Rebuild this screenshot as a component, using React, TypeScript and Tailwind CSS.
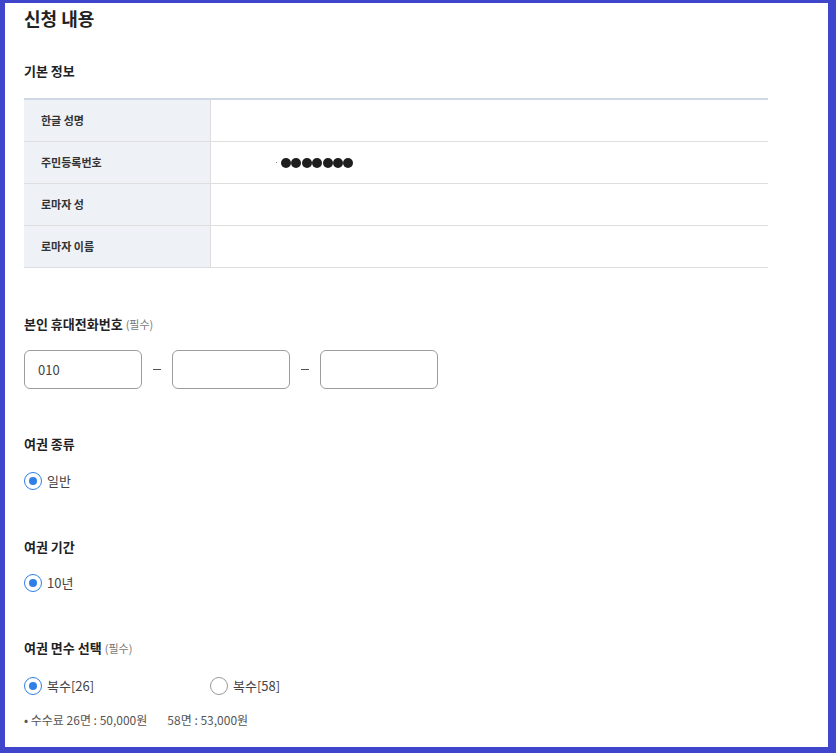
import React from 'react';

const rows = ['한글 성명', '주민등록번호', '로마자 성', '로마자 이름'];

function Radio({ checked, label }: { checked?: boolean; label: string }) {
  return (
    <div className="flex items-center gap-[5px] h-[20px]">
      <span
        className={`w-[18px] h-[18px] rounded-full border-[1.5px] flex items-center justify-center bg-white ${
          checked ? 'border-[#2f7fe6]' : 'border-[#9a9a9a]'
        }`}
      >
        {checked && <span className="w-[8px] h-[8px] rounded-full bg-[#2f7fe6]" />}
      </span>
      <span className="text-[13px] text-[#444] leading-[20px]">{label}</span>
    </div>
  );
}

function Heading({ children, required }: { children: React.ReactNode; required?: boolean }) {
  return (
    <div className="text-[13px] leading-[20px] font-bold text-[#222]">
      {children}
      {required && <span className="ml-[3px] text-[11px] font-normal text-[#777]">(필수)</span>}
    </div>
  );
}

export default function App() {
  return (
    <div
      className="w-[836px] h-[753px] bg-[#3f46cc] pt-[3px] pl-[5px] pr-[8px] pb-[6px]"
      style={{ fontFamily: '"Noto Sans CJK KR", "Noto Sans", sans-serif' }}
    >
      <div className="w-full h-full bg-white overflow-hidden pl-[19px] flex flex-col">
        <h1 className="mt-[2px] text-[18px] leading-[26px] font-bold text-[#222]">신청 내용</h1>

        <div className="mt-[30px]">
          <Heading>기본 정보</Heading>
        </div>

        {/* basic info table */}
        <div className="mt-[17px] w-[744px] border-t-2 border-[#cfd8e4]">
          {rows.map((r, i) => (
            <div key={r} className="flex h-[42px] border-b border-[#dedede]">
              <div className="w-[187px] shrink-0 bg-[#eef1f5] border-r border-[#dedede] pl-[17px] flex items-center text-[11px] font-semibold text-[#333]">
                {r}
              </div>
              <div className="flex-1 flex items-center">
                {i === 1 && (
                  <div className="flex items-center pl-[65px]">
                    <span className="w-[1px] h-[1px] bg-[#888] mr-[4px]" />
                    <div className="flex gap-[0.4px]">
                      {Array.from({ length: 7 }).map((_, k) => (
                        <span key={k} className="w-[10px] h-[10px] rounded-full bg-[#1e1e1e]" />
                      ))}
                    </div>
                  </div>
                )}
              </div>
            </div>
          ))}
        </div>

        <div className="mt-[46px]">
          <Heading required>본인 휴대전화번호</Heading>
        </div>
        <div className="mt-[16px] flex items-center">
          <div className="w-[118px] h-[39px] rounded-[6px] border border-[#9c9c9c] flex items-center pl-[13px] text-[13px] text-[#444]">
            010
          </div>
          <span className="w-[30px] flex justify-center">
            <span className="w-[8px] h-[1px] bg-[#555]" />
          </span>
          <div className="w-[118px] h-[39px] rounded-[6px] border border-[#9c9c9c]" />
          <span className="w-[30px] flex justify-center">
            <span className="w-[8px] h-[1px] bg-[#555]" />
          </span>
          <div className="w-[118px] h-[39px] rounded-[6px] border border-[#9c9c9c]" />
        </div>

        <div className="mt-[45px]">
          <Heading>여권 종류</Heading>
        </div>
        <div className="mt-[17px]">
          <Radio checked label="일반" />
        </div>

        <div className="mt-[46px]">
          <Heading>여권 기간</Heading>
        </div>
        <div className="mt-[16px]">
          <Radio checked label="10년" />
        </div>

        <div className="mt-[45px]">
          <Heading required>여권 면수 선택</Heading>
        </div>
        <div className="mt-[18px] flex">
          <div className="w-[186px]">
            <Radio checked label="복수[26]" />
          </div>
          <Radio label="복수[58]" />
        </div>

        <div className="mt-[16px] flex text-[12px] leading-[16px] text-[#555]">
          <span>• 수수료 26면 : 50,000원</span>
          <span className="ml-[20px]">58면 : 53,000원</span>
        </div>
      </div>
    </div>
  );
}
